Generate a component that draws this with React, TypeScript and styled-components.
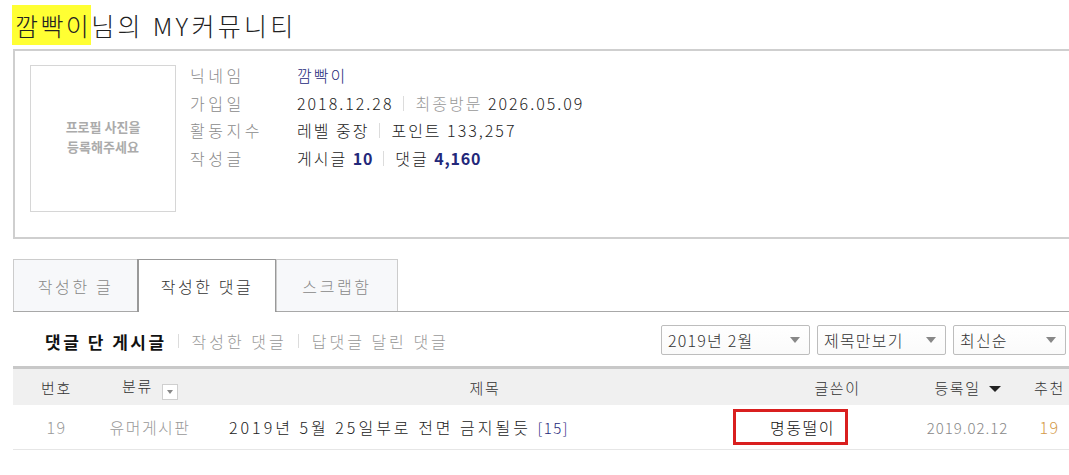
import React from 'react';
import styled, { createGlobalStyle } from 'styled-components';

const GlobalStyle = createGlobalStyle`
  body {
    margin: 0;
    background: #fff;
    overflow: hidden;
    font-family: "Noto Sans CJK KR", "Noto Sans", sans-serif;
    font-weight: 300;
    color: #333;
  }
`;

const NAVY = '#23287a';

export default function App() {
  return (
    <>
      <GlobalStyle />
      <Page>
        <Title>
          <Highlight>깜빡이</Highlight>님의 MY커뮤니티
        </Title>

        <ProfileBox>
          <Photo>
            프로필 사진을
            <br />
            등록해주세요
          </Photo>
          <InfoList>
            <Label>닉네임</Label>
            <Value><Navy>깜빡이</Navy></Value>
            <Label>가입일</Label>
            <Value>
              2018.12.28<Divider />
              <Muted>최종방문</Muted> 2026.05.09
            </Value>
            <Label>활동지수</Label>
            <Value>
              레벨 중장<Divider />포인트 133,257
            </Value>
            <Label>작성글</Label>
            <Value>
              게시글 <Navy $bold>10</Navy><Divider />댓글 <Navy $bold>4,160</Navy>
            </Value>
          </InfoList>
        </ProfileBox>

        <TabBar>
          <Tab $width={125}>작성한 글</Tab>
          <Tab $width={140} $active>작성한 댓글</Tab>
          <Tab $width={122}>스크랩함</Tab>
        </TabBar>

        <SubBar>
          <SubTabs>
            <SubTab $active>댓글 단 게시글</SubTab>
            <SubDivider />
            <SubTab>작성한 댓글</SubTab>
            <SubDivider />
            <SubTab>답댓글 달린 댓글</SubTab>
          </SubTabs>
          <Selects>
            <Select $width={149}>2019년 2월<Caret /></Select>
            <Select $width={129}>제목만보기<Caret /></Select>
            <Select $width={113}>최신순<Caret /></Select>
          </Selects>
        </SubBar>

        <Table>
          <colgroup>
            <col style={{ width: 87 }} />
            <col style={{ width: 100 }} />
            <col style={{ width: 570 }} />
            <col style={{ width: 135 }} />
            <col style={{ width: 125 }} />
            <col style={{ width: 39 }} />
          </colgroup>
          <thead>
            <tr>
              <Th>번호</Th>
              <Th>
                분류<FilterBox><SmallCaret /></FilterBox>
              </Th>
              <Th>제목</Th>
              <Th>글쓴이</Th>
              <Th>
                등록일<SortCaret />
              </Th>
              <Th>추천</Th>
            </tr>
          </thead>
          <tbody>
            <tr>
              <Td $color="#999">19</Td>
              <Td $color="#999">유머게시판</Td>
              <TitleCell>
                2019년 5월 25일부로 전면 금지될듯 <Count>[15]</Count>
              </TitleCell>
              <Td>
                <WriterWrap>
                  <Marked>명동떨이</Marked>
                </WriterWrap>
              </Td>
              <Td $color="#888" $small>2019.02.12</Td>
              <Td $color="#d49a4a">19</Td>
            </tr>
          </tbody>
        </Table>
      </Page>
    </>
  );
}

const Page = styled.div`
  width: 1056px;
  padding-left: 13px;
`;

const Title = styled.h1`
  margin: 0 0 0 -1px;
  height: 49px;
  display: flex;
  align-items: center;
  font-size: 25px;
  font-weight: 300;
  letter-spacing: 3.3px;
  color: #222;
  white-space: pre;
`;

const Highlight = styled.span`
  display: inline-block;
  background: #ffff33;
  height: 40px;
  line-height: 40px;
  padding-left: 3px;
  letter-spacing: 2.4px;
`;

const ProfileBox = styled.div`
  width: calc(100% + 20px);
  box-sizing: border-box;
  height: 190px;
  border: 2px solid #cfcfcf;
  padding: 14px 15px;
  display: flex;
  align-items: flex-start;
`;

const Photo = styled.div`
  width: 146px;
  height: 147px;
  box-sizing: border-box;
  border: 1px solid #d6d6d6;
  display: flex;
  align-items: center;
  justify-content: center;
  text-align: center;
  font-size: 13px;
  font-weight: 700;
  line-height: 20px;
  color: #ababab;
  padding-bottom: 4px;
`;

const InfoList = styled.div`
  margin-left: 14px;
  margin-top: -3px;
  display: grid;
  grid-template-columns: 107px auto;
  line-height: 27.5px;
  font-size: 16px;
  letter-spacing: 2px;
`;

const Label = styled.div`
  color: #8a8a8a;
  letter-spacing: 3.5px;
`;

const Value = styled.div`
  color: #222;
  display: flex;
  align-items: center;
  white-space: pre;
`;

const Navy = styled.span<{ $bold?: boolean }>`
  color: ${NAVY};
  font-weight: ${p => (p.$bold ? 700 : 300)};
  letter-spacing: ${p => (p.$bold ? '0.8px' : 'inherit')};
`;

const Muted = styled.span`
  color: #999;
`;

const Divider = styled.span`
  display: inline-block;
  width: 1px;
  height: 15px;
  background: #dcdcdc;
  margin: 0 11px 0 10px;
`;

const TabBar = styled.div`
  margin-top: 20px;
  display: flex;
  border-bottom: 1px solid #a8a8a8;
  width: calc(100% + 20px);
`;

const Tab = styled.div<{ $width: number; $active?: boolean }>`
  width: ${p => p.$width}px;
  box-sizing: border-box;
  display: flex;
  align-items: center;
  justify-content: center;
  font-size: 16px;
  letter-spacing: 2.6px;
  background: ${p => (p.$active ? '#fff' : '#f7f8fa')};
  color: ${p => (p.$active ? '#333' : '#888')};
  border: 1px solid ${p => (p.$active ? '#999' : '#cccccc')};
  border-bottom: none;
  margin-bottom: ${p => (p.$active ? '-1px' : '0')};
  height: ${p => (p.$active ? '53px' : '52px')};
  border-left-width: ${p => (p.$active ? '2px' : '1px')};
  border-right-width: ${p => (p.$active ? '2px' : '1px')};
  & + & {
    margin-left: -1px;
  }
`;

const SubBar = styled.div`
  height: 54px;
  display: flex;
  align-items: center;
  justify-content: space-between;
  padding-right: 3px;
`;

const SubTabs = styled.div`
  display: flex;
  align-items: center;
  padding-left: 32px;
  padding-top: 4px;
`;

const SubTab = styled.span<{ $active?: boolean }>`
  font-size: ${p => (p.$active ? '17px' : '16px')};
  font-weight: ${p => (p.$active ? 700 : 300)};
  letter-spacing: ${p => (p.$active ? '2.5px' : '3px')};
  color: ${p => (p.$active ? '#111' : '#999')};
`;

const SubDivider = styled.span`
  display: inline-block;
  width: 1px;
  height: 14px;
  background: #dcdcdc;
  margin: 0 13px 0 11px;
`;

const Selects = styled.div`
  display: flex;
  gap: 7px;
  margin-top: 1px;
`;

const Select = styled.div<{ $width: number }>`
  width: ${p => p.$width}px;
  height: 30px;
  box-sizing: border-box;
  border: 1px solid #bdbdbd;
  border-radius: 2px;
  background: linear-gradient(#fff, #fafafa);
  display: flex;
  align-items: center;
  justify-content: space-between;
  padding: 0 9px 0 6px;
  font-size: 16px;
  letter-spacing: 1.2px;
  color: #333;
`;

const Caret = styled.span`
  width: 0;
  height: 0;
  border-left: 5px solid transparent;
  border-right: 5px solid transparent;
  border-top: 6px solid #888;
`;

const Table = styled.table`
  width: 1056px;
  table-layout: fixed;
  border-collapse: collapse;
  border-top: 3px solid #c8c8c8;
`;

const Th = styled.th`
  height: 36px;
  padding: 0;
  background: #f0f0f0;
  font-size: 15px;
  font-weight: 300;
  letter-spacing: 1.6px;
  color: #333;
  text-align: center;
  white-space: nowrap;
`;

const FilterBox = styled.span`
  display: inline-flex;
  align-items: center;
  justify-content: center;
  vertical-align: -2px;
  width: 16px;
  height: 16px;
  box-sizing: border-box;
  margin-left: 9px;
  border: 1px solid #cfcfcf;
  background: #fff;
`;

const SmallCaret = styled.span`
  width: 0;
  height: 0;
  border-left: 3px solid transparent;
  border-right: 3px solid transparent;
  border-top: 4px solid #888;
`;

const SortCaret = styled.span`
  display: inline-block;
  vertical-align: 2px;
  margin-left: 8px;
  width: 0;
  height: 0;
  border-left: 6px solid transparent;
  border-right: 6px solid transparent;
  border-top: 6px solid #222;
`;

const Td = styled.td<{ $color?: string; $small?: boolean }>`
  height: 44px;
  padding: 0;
  border-bottom: 1px solid #e6e6e6;
  text-align: center;
  font-size: ${p => (p.$small ? '15px' : '16px')};
  letter-spacing: ${p => (p.$small ? '1px' : '1.5px')};
  color: ${p => p.$color || '#222'};
  white-space: nowrap;
`;

const TitleCell = styled(Td)`
  text-align: left;
  padding-left: 29px;
  letter-spacing: 3px;
  color: #222;
`;

const Count = styled.span`
  color: ${NAVY};
  font-size: 15px;
  letter-spacing: 1.5px;
`;

const WriterWrap = styled.div`
  display: flex;
  justify-content: flex-end;
  padding-right: 57px;
`;

const Marked = styled.span`
  flex-shrink: 0;
  width: 115px;
  height: 36px;
  box-sizing: border-box;
  border: 3px solid #d91f1f;
  display: flex;
  align-items: center;
  justify-content: flex-end;
  padding-right: 10px;
  color: #111;
`;
